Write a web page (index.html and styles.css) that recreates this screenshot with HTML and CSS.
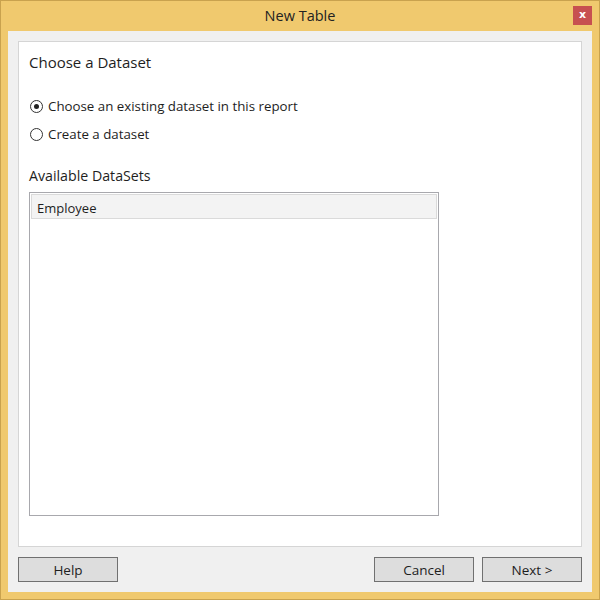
FILE: index.html
```html
<!DOCTYPE html>
<html>
<head>
<meta charset="utf-8">
<link rel="stylesheet" href="styles.css">
</head>
<body>
<div class="window">
  <div class="titlebar">
    <span></span>
    <span class="title">New Table</span>
    <span class="close">x</span>
  </div>
  <div class="client">
    <div class="panel">
      <div class="heading">Choose a Dataset</div>
      <div class="options">
        <label class="radio"><span class="dot checked"></span>Choose an existing dataset in this report</label>
        <label class="radio"><span class="dot"></span>Create a dataset</label>
      </div>
      <div class="section">Available DataSets</div>
      <div class="list">
        <div class="item">Employee</div>
      </div>
    </div>
    <div class="buttons">
      <button class="btn">Help</button>
      <div class="spacer"></div>
      <button class="btn">Cancel</button>
      <button class="btn">Next &gt;</button>
    </div>
  </div>
</div>
</body>
</html>
```
FILE: styles.css
```css
* { box-sizing: border-box; }
html, body { margin: 0; padding: 0; }
body {
  font-family: "Open Sans", "Noto Sans", sans-serif;
  font-size: 12px;
  color: #1e1e1e;
}
.window {
  width: 600px;
  height: 600px;
  border: 1px solid #c9a24e;
  background: #f0c96e;
  display: flex;
  flex-direction: column;
}
.titlebar {
  height: 30px;
  display: grid;
  grid-template-columns: 1fr auto 1fr;
  align-items: start;
}
.title {
  font-size: 14.5px;
  line-height: 30px;
  color: #222;
}
.close {
  justify-self: end;
  margin-top: 5px;
  margin-right: 7px;
  width: 19px;
  height: 19px;
  background: #c75050;
  color: #fff;
  font-weight: bold;
  font-size: 11px;
  line-height: 17px;
  text-align: center;
  font-family: "DejaVu Sans", sans-serif;
}
.client {
  flex: 1;
  margin: 0 7px 7px 7px;
  background: #f0f0f0;
  padding: 10px 10px 9px 10px;
  display: flex;
  flex-direction: column;
}
.panel {
  height: 506px;
  background: #fff;
  border: 1px solid #d5d5d5;
  padding: 10px 10px 0 10px;
}
.heading {
  font-size: 15px;
  line-height: 20px;
  margin-top: 0;
}
.options {
  margin-top: 24px;
  display: flex;
  flex-direction: column;
  gap: 8px;
}
.radio {
  display: flex;
  align-items: center;
  line-height: 20px;
  padding-left: 1px;
  font-size: 13.3px;
}
.dot {
  width: 13px;
  height: 13px;
  border: 1px solid #333;
  border-radius: 50%;
  margin-right: 5px;
  display: flex;
  align-items: center;
  justify-content: center;
  background: #fff;
}
.dot.checked::after {
  content: "";
  width: 5px;
  height: 5px;
  border-radius: 50%;
  background: #222;
}
.section {
  margin-top: 22px;
  font-size: 14.2px;
  line-height: 20px;
}
.list {
  margin-top: 6px;
  width: 410px;
  height: 324px;
  border: 1px solid #a8a8ad;
  padding: 1px;
}
.item {
  height: 25px;
  background: #f3f3f3;
  border: 1px solid #dadada;
  font-size: 13px;
  line-height: 23px;
  padding: 2px 0 0 5px;
}
.buttons {
  margin-top: 10px;
  display: flex;
  gap: 8px;
}
.spacer { flex: 1; }
.btn {
  width: 100px;
  height: 25px;
  border: 1px solid #707070;
  background: #dddddd;
  font-family: inherit;
  font-size: 13.5px;
  color: #1e1e1e;
  padding: 0;
}
```
